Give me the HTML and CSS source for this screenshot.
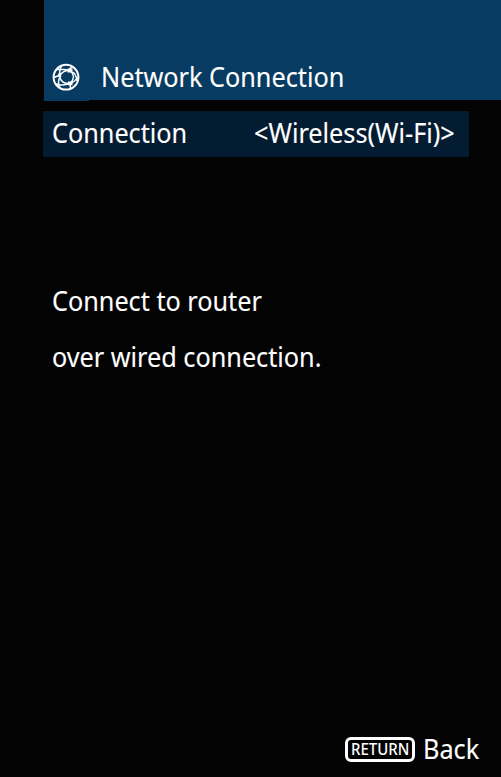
FILE: index.html
```html
<!DOCTYPE html>
<html lang="en">
<head>
<meta charset="utf-8">
<title>Network Connection</title>
<link rel="stylesheet" href="styles.css">
</head>
<body>
<div class="screen">
  <header class="header">
    <div class="header-icon">
      <svg width="28" height="28" viewBox="0 0 28 28" fill="none" stroke="#fff">
        <circle cx="14" cy="14.2" r="12.4" stroke-width="2"/>
        <path stroke-width="1.5" d="M8 12Q12 7 17 7.5Q21 9 21.5 14Q21 18 18 20.5Q12 21 9 17Q7.5 14 8 12M4 6.5Q10 5.5 17 7.5M17 7.5L20 3M21 9Q24.5 12 25 18M8 12Q7 6 10 2.5M8 12L2 14.5M8 14Q5 19 8 25M4 21Q11 23 18 20.5M18 20.5Q23 19 25.5 14M18 20.5L18.5 26"/>
        <path fill="#fff" stroke="none" d="M15.5 5.5h5v4h-5zM16 18.5h4.5v3.8h-4.5zM6 10.5h3.2v3.2h-3.2z"/>
      </svg>
    </div>
    <h1 class="title text">Network Connection</h1>
  </header>
  <main class="content">
    <div class="row">
      <span class="text">Connection</span>
      <span class="text value">&lt;Wireless(Wi-Fi)&gt;</span>
    </div>
    <p class="message"><span class="text">Connect to router</span><span class="text">over wired connection.</span></p>
  </main>
  <footer class="footer">
    <span class="key"><span class="key-label">RETURN</span></span>
    <span class="text back">Back</span>
  </footer>
</div>
</body>
</html>
```
FILE: styles.css
```css
* { box-sizing: border-box; }
body { margin: 0; background: #030303; color: #fff; font-family: "Noto Sans", sans-serif; }
.screen { height: 777px; display: flex; flex-direction: column; overflow: hidden; }
.text {
  display: block;
  margin: 0;
  font-size: 28px;
  font-weight: 400;
  line-height: 42px;
  white-space: nowrap;
  transform: scaleX(.901);
  transform-origin: left;
  -webkit-text-stroke: .12px #fff;
}
.header { flex: none; height: 100px; margin-left: 44px; background: #083b61; display: flex; align-items: flex-end; }
.header-icon { width: 45px; height: 46px; margin-bottom: -1px; padding: 8px 0 0 8px; background: #083b61; }
.header-icon svg { display: block; }
.title { margin: 0 0 3px 12px; }
.content { flex: 1; padding: 11px 32px 0 43px; }
.row { height: 46px; padding: 0 14px 0 9px; background: #041c32; display: flex; justify-content: space-between; }
.value { transform-origin: right; }
.message { margin: 115px 0 0 9px; }
.message .text { line-height: 56px; }
.footer { flex: none; height: 51px; display: flex; padding-left: 345px; }
.key { width: 70px; height: 25px; margin-top: 11px; padding-bottom: 2px; border: 3px solid #fff; border-radius: 6px; display: flex; justify-content: center; align-items: center; }
.key-label { font-size: 17px; line-height: 19px; font-weight: 500; transform: scaleX(.88); }
.back { margin: 1px 0 0 8px; }
```
